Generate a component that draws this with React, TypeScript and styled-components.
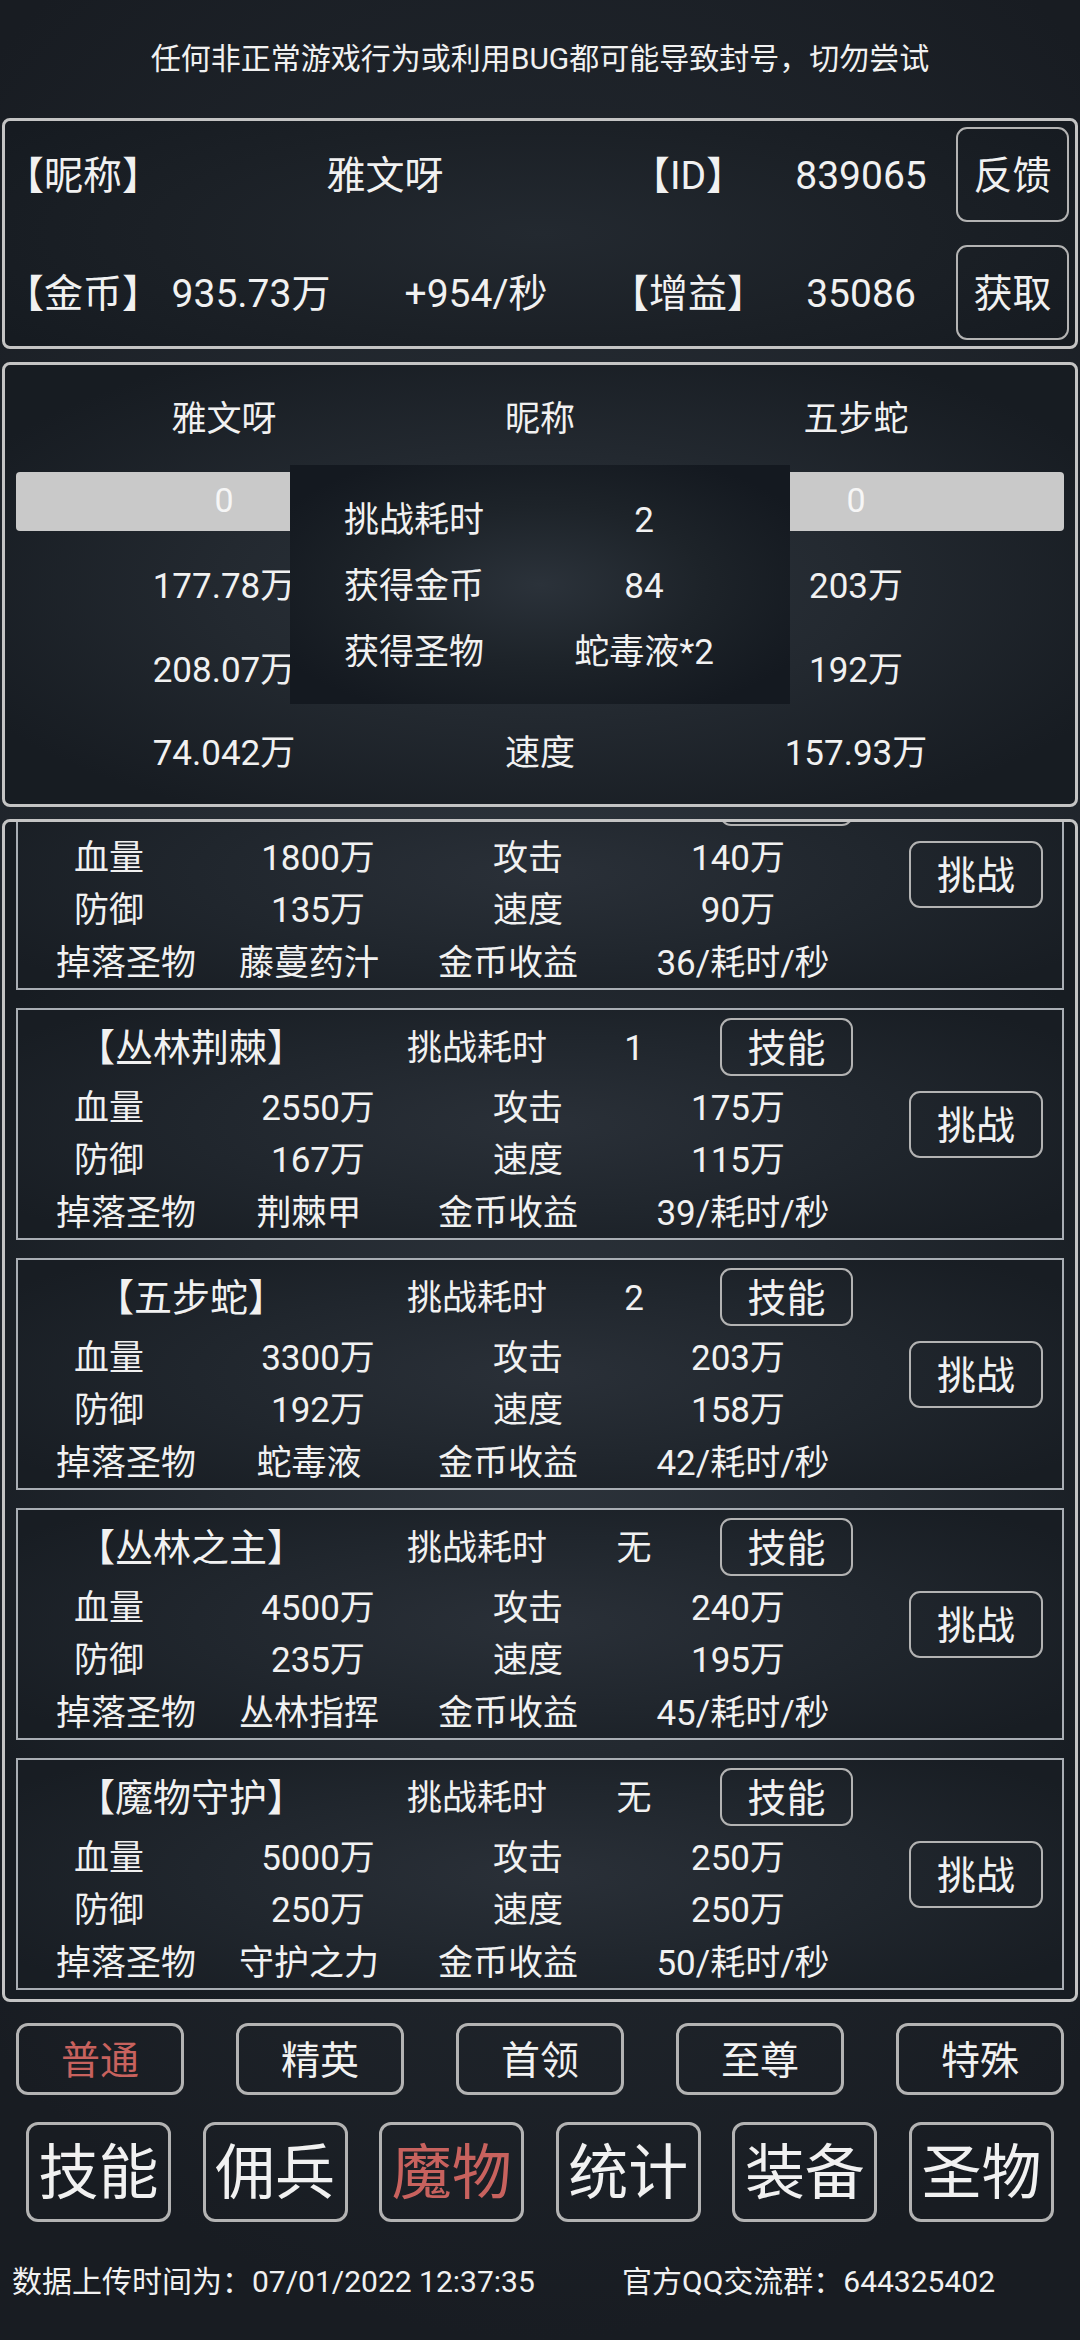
import React from "react";
import styled, { createGlobalStyle, css } from "styled-components";

const GlobalStyle = createGlobalStyle`
  html, body { margin: 0; padding: 0; }
  body {
    width: 1080px;
    background: #1b2027;
    font-family: Roboto, "Noto Sans CJK SC", sans-serif;
    color: #f1f1f1;
  }
  * { box-sizing: border-box; }
`;

const glow = css`
  background: radial-gradient(ellipse 60% 60% at 50% 50%, #2d343c 0%, #232930 50%, #171c22 100%);
`;

const Page = styled.div`
  width: 1080px;
  height: 2340px;
  padding: 0 2px;
  display: flex;
  flex-direction: column;
  align-items: center;
  background: radial-gradient(ellipse 80% 55% at 50% 45%, #2e353d 0%, #232930 50%, #181c22 100%);
`;

const Warning = styled.div`
  height: 118px;
  width: 100%;
  padding-bottom: 6px;
  display: flex;
  align-items: center;
  justify-content: center;
  font-size: 30px;
`;

const Panel = styled.div`
  width: 1076px;
  border: 3px solid #c4c4c4;
  border-radius: 8px;
  ${glow}
`;

const InfoPanel = styled(Panel)`
  display: grid;
  grid-template-columns: 155px 182px 268px 156px 190px 113px;
  grid-template-rows: 95px 95px;
  row-gap: 23px;
  padding: 6px 6px 6px 0;
  font-size: 39px;
  background: radial-gradient(ellipse 60% 80% at 50% 50%, #232930 0%, #1b2026 60%, #161b21 100%);
`;

const Cell = styled.div<{ $align?: "left" | "center"; $span?: number; $shift?: number }>`
  display: flex;
  align-items: center;
  justify-content: ${(p) => (p.$align === "left" ? "flex-start" : "center")};
  white-space: nowrap;
  line-height: 1.2;
  grid-column: span ${(p) => p.$span ?? 1};
  padding-top: ${(p) => p.$shift ?? 0}px;
`;

const OutlineButton = styled.button<{ $size: number; $w: number; $h: number; $active?: boolean; $radius?: number; $bw?: number }>`
  width: ${(p) => p.$w}px;
  height: ${(p) => p.$h}px;
  border: ${(p) => p.$bw ?? 2}px solid #b3b3b3;
  border-radius: ${(p) => p.$radius ?? 11}px;
  background: transparent;
  color: ${(p) => (p.$active ? "#c8625e" : "#f1f1f1")};
  font-family: Roboto, "Noto Sans CJK SC", sans-serif;
  font-size: ${(p) => p.$size}px;
  line-height: 1.2;
  padding: 4px 0 0;
  display: flex;
  align-items: center;
  justify-content: center;
  flex-shrink: 0;
  white-space: nowrap;
`;

const BattlePanel = styled(Panel)`
  margin-top: 13px;
  position: relative;
  padding: 11px 11px;
  display: grid;
  grid-template-columns: 416px 216px 416px;
  grid-template-rows: 83px 84px 83px 84px 83px;
  font-size: 35px;
`;

const Bar = styled.div`
  height: 59px;
  width: 100%;
  background: #c9c9c9;
  border-radius: 4px;
  color: #f6f6f6;
  display: flex;
  align-items: center;
  justify-content: center;
  font-size: 34px;
  padding-bottom: 2px;
`;

const Popup = styled.div`
  position: absolute;
  left: 285px;
  top: 100px;
  width: 500px;
  height: 239px;
  padding-top: 21px;
  display: grid;
  grid-template-columns: 248px 212px;
  grid-template-rows: 66px 66px 66px;
  align-content: start;
  background: radial-gradient(ellipse 60% 60% at 50% 50%, #2b323a 0%, #1d2329 55%, #141920 100%);
  font-size: 35px;
`;

const ListPanel = styled(Panel)`
  margin-top: 12px;
  overflow: hidden;
  padding: 0 11px 9px;
`;

const List = styled.div`
  margin-top: -64px;
  display: flex;
  flex-direction: column;
  gap: 18px;
`;

const Card = styled.div`
  height: 232px;
  border: 2px solid #a9aeb4;
  padding: 8px 0 2px 0;
  display: flex;
  flex-direction: column;
  background: radial-gradient(ellipse 60% 70% at 50% 50%, #2a3038 0%, #20262d 55%, #181d23 100%);
`;

const TitleRow = styled.div`
  height: 58px;
  margin-bottom: 4px;
  display: grid;
  grid-template-columns: 332px 254px 60px 133px;
  font-size: 35px;
`;

const TitleName = styled(Cell)`
  font-size: 38px;
  padding-left: 14px;
`;

const SkillCell = styled.div`
  padding-left: 56px;
  width: 189px;
`;

const CardBody = styled.div`
  display: flex;
  align-items: flex-start;
`;

const Stats = styled.div`
  display: flex;
  flex-direction: column;
`;

const StatRow = styled.div<{ $drop?: boolean }>`
  height: 52px;
  display: grid;
  grid-template-columns: ${(p) => (p.$drop ? "216px 150px 248px 222px" : "182px 236px 184px 236px")};
  font-size: 35px;
`;

const ChallengeWrap = styled.div`
  margin-left: auto;
  margin-right: 19px;
  margin-top: 11px;
`;

const TabRow = styled.div`
  margin-top: 21px;
  width: 1048px;
  display: flex;
  justify-content: space-between;
`;

const NavRow = styled.div`
  margin-top: 27px;
  width: 1028px;
  display: flex;
  justify-content: space-between;
`;

const Footer = styled.div`
  margin-top: 38px;
  height: 38px;
  width: 100%;
  padding-left: 10px;
  display: flex;
  align-items: center;
  font-size: 30px;
  white-space: nowrap;
`;

const FooterItem = styled.span<{ $w?: number }>`
  width: ${(p) => (p.$w ? `${p.$w}px` : "auto")};
`;

type Monster = {
  name: string;
  time: string;
  hp: string;
  atk: string;
  def: string;
  spd: string;
  drop: string;
  gold: string;
};

const monsters: Monster[] = [
  { name: "【丛林藤蔓】", time: "1", hp: "1800万", atk: "140万", def: "135万", spd: "90万", drop: "藤蔓药汁", gold: "36/耗时/秒" },
  { name: "【丛林荆棘】", time: "1", hp: "2550万", atk: "175万", def: "167万", spd: "115万", drop: "荆棘甲", gold: "39/耗时/秒" },
  { name: "【五步蛇】", time: "2", hp: "3300万", atk: "203万", def: "192万", spd: "158万", drop: "蛇毒液", gold: "42/耗时/秒" },
  { name: "【丛林之主】", time: "无", hp: "4500万", atk: "240万", def: "235万", spd: "195万", drop: "丛林指挥", gold: "45/耗时/秒" },
  { name: "【魔物守护】", time: "无", hp: "5000万", atk: "250万", def: "250万", spd: "250万", drop: "守护之力", gold: "50/耗时/秒" },
];

const tabs = ["普通", "精英", "首领", "至尊", "特殊"];
const navs = ["技能", "佣兵", "魔物", "统计", "装备", "圣物"];

function MonsterCard({ m }: { m: Monster }) {
  return (
    <Card>
      <TitleRow>
        <TitleName $shift={4}>{m.name}</TitleName>
        <Cell $shift={4}>挑战耗时</Cell>
        <Cell $shift={4}>{m.time}</Cell>
        <SkillCell>
          <OutlineButton $size={39} $w={133} $h={58}>技能</OutlineButton>
        </SkillCell>
      </TitleRow>
      <CardBody>
        <Stats>
          <StatRow>
            <Cell $shift={6}>血量</Cell>
            <Cell $shift={6}>{m.hp}</Cell>
            <Cell $shift={6}>攻击</Cell>
            <Cell $shift={6}>{m.atk}</Cell>
          </StatRow>
          <StatRow>
            <Cell $shift={6}>防御</Cell>
            <Cell $shift={6}>{m.def}</Cell>
            <Cell $shift={6}>速度</Cell>
            <Cell $shift={6}>{m.spd}</Cell>
          </StatRow>
          <StatRow $drop>
            <Cell $shift={8}>掉落圣物</Cell>
            <Cell $shift={8}>{m.drop}</Cell>
            <Cell $shift={8}>金币收益</Cell>
            <Cell $shift={8}>{m.gold}</Cell>
          </StatRow>
        </Stats>
        <ChallengeWrap>
          <OutlineButton $size={39} $w={134} $h={67}>挑战</OutlineButton>
        </ChallengeWrap>
      </CardBody>
    </Card>
  );
}

export default function App() {
  return (
    <>
      <GlobalStyle />
      <Page>
        <Warning>任何非正常游戏行为或利用BUG都可能导致封号，切勿尝试</Warning>

        <InfoPanel>
          <Cell $align="left" $shift={4}>【昵称】</Cell>
          <Cell $span={2} $shift={4}>雅文呀</Cell>
          <Cell $shift={4}>【ID】</Cell>
          <Cell $shift={4}>839065</Cell>
          <OutlineButton $size={39} $w={113} $h={95}>反馈</OutlineButton>

          <Cell $align="left" $shift={4}>【金币】</Cell>
          <Cell $shift={4}>935.73万</Cell>
          <Cell $shift={4}>+954/秒</Cell>
          <Cell $shift={4}>【增益】</Cell>
          <Cell $shift={4}>35086</Cell>
          <OutlineButton $size={39} $w={113} $h={95}>获取</OutlineButton>
        </InfoPanel>

        <BattlePanel>
          <Cell $shift={5}>雅文呀</Cell>
          <Cell $shift={5}>昵称</Cell>
          <Cell $shift={5}>五步蛇</Cell>

          <Cell><Bar>0</Bar></Cell>
          <Cell>血量</Cell>
          <Cell><Bar>0</Bar></Cell>

          <Cell $shift={5}>177.78万</Cell>
          <Cell $shift={5}>攻击</Cell>
          <Cell $shift={5}>203万</Cell>

          <Cell $shift={5}>208.07万</Cell>
          <Cell $shift={5}>防御</Cell>
          <Cell $shift={5}>192万</Cell>

          <Cell $shift={5}>74.042万</Cell>
          <Cell $shift={5}>速度</Cell>
          <Cell $shift={5}>157.93万</Cell>

          <Popup>
            <Cell $shift={3}>挑战耗时</Cell>
            <Cell $shift={3}>2</Cell>
            <Cell $shift={3}>获得金币</Cell>
            <Cell $shift={3}>84</Cell>
            <Cell $shift={3}>获得圣物</Cell>
            <Cell $shift={3}>蛇毒液*2</Cell>
          </Popup>
        </BattlePanel>

        <ListPanel>
          <List>
            {monsters.map((m) => (
              <MonsterCard key={m.name} m={m} />
            ))}
          </List>
        </ListPanel>

        <TabRow>
          {tabs.map((t, i) => (
            <OutlineButton key={t} $size={39} $w={168} $h={72} $radius={12} $bw={3} $active={i === 0}>
              {t}
            </OutlineButton>
          ))}
        </TabRow>

        <NavRow>
          {navs.map((t) => (
            <OutlineButton key={t} $size={60} $w={145} $h={100} $radius={12} $bw={3} $active={t === "魔物"}>
              {t}
            </OutlineButton>
          ))}
        </NavRow>

        <Footer>
          <FooterItem $w={610}>数据上传时间为：07/01/2022 12:37:35</FooterItem>
          <FooterItem>官方QQ交流群：644325402</FooterItem>
        </Footer>
      </Page>
    </>
  );
}
